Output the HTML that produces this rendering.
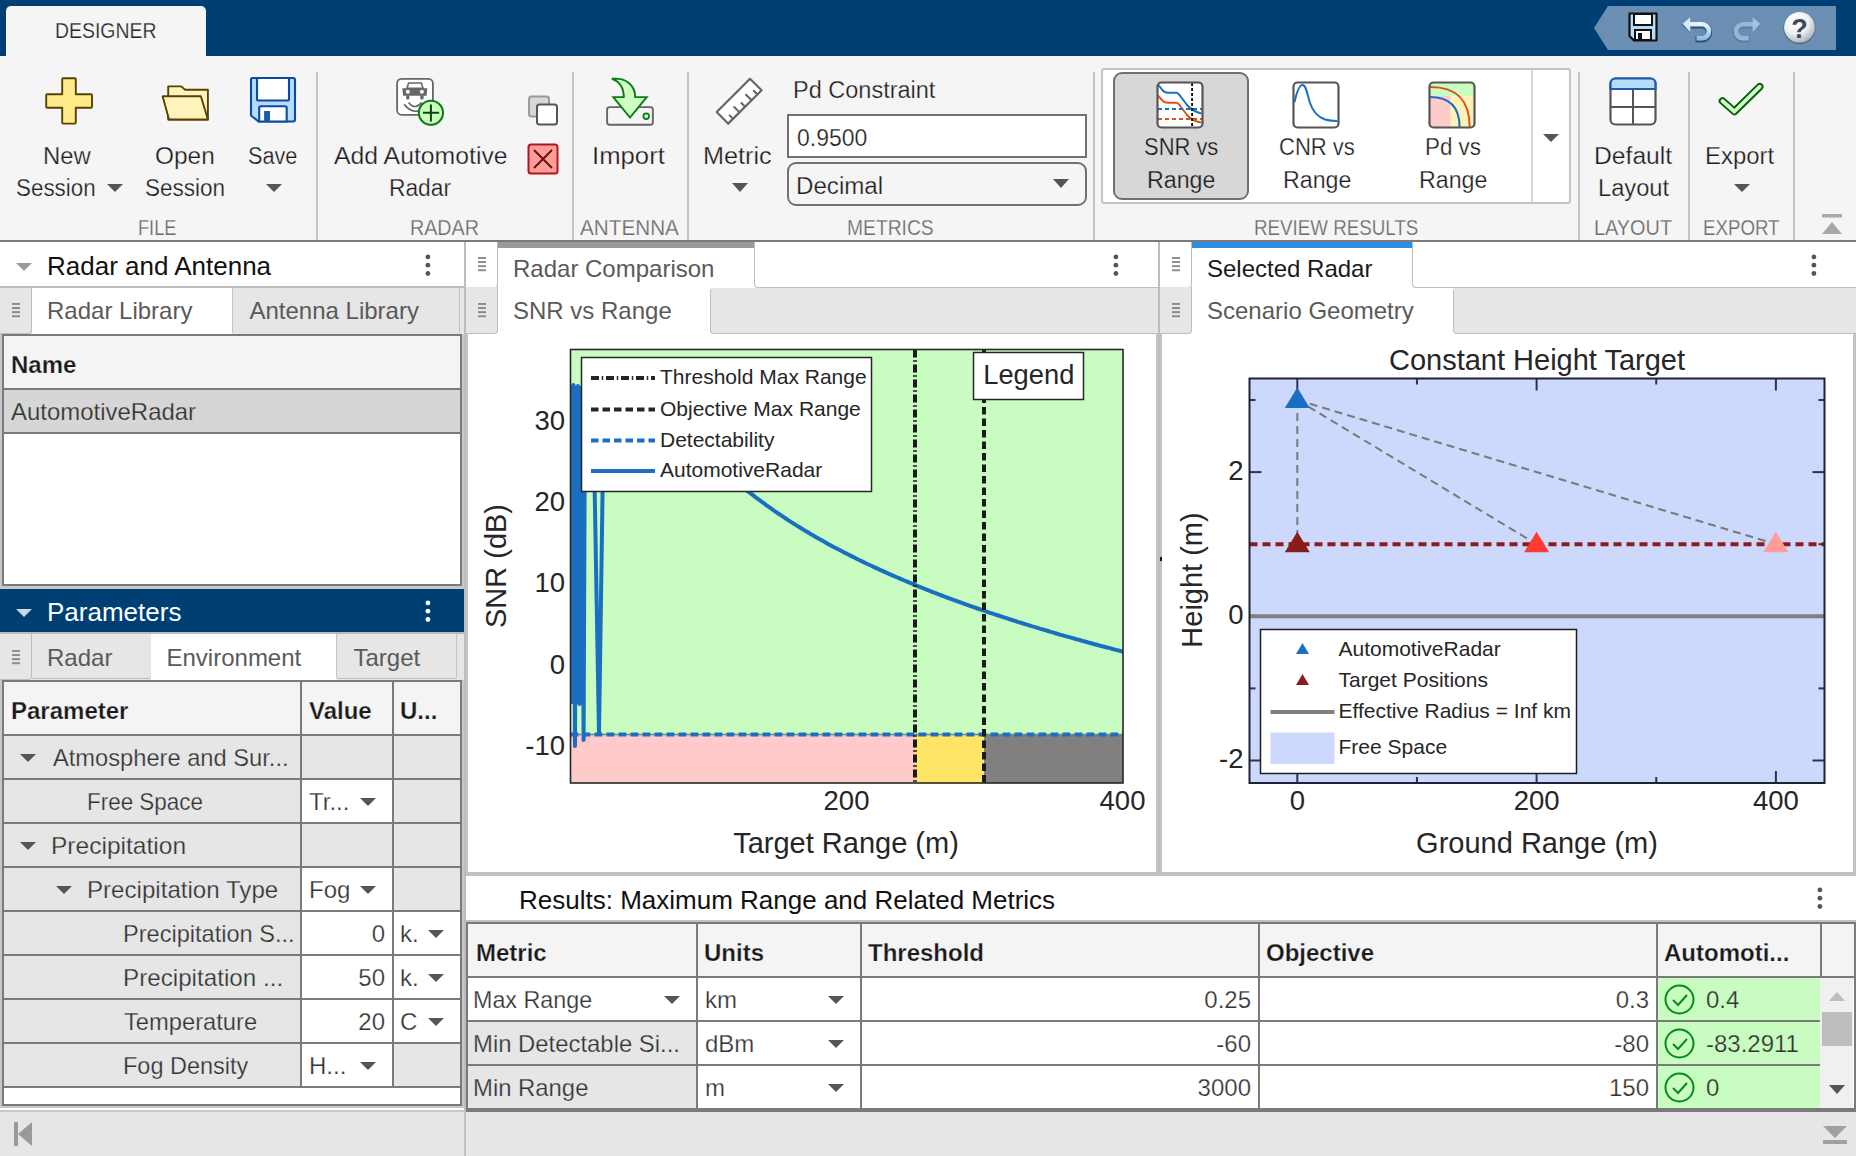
<!DOCTYPE html><html><head><meta charset="utf-8"><style>html,body{margin:0;padding:0;width:1856px;height:1156px;overflow:hidden;background:#fff;font-family:"Liberation Sans",sans-serif}</style></head><body>
<div style="position:absolute;left:0px;top:0px;width:1856px;height:56px;background:#003f73;"></div>
<div style="position:absolute;left:6px;top:6px;width:200px;height:50px;background:#f5f5f5;border-radius:5px 5px 0 0;"></div>
<div style="position:absolute;left:55.45px;top:20px;font-family:'Liberation Sans', sans-serif;font-size:22px;line-height:22px;height:22px;color:#222;font-weight:normal;white-space:nowrap;transform-origin:0 0;transform:scaleX(0.8832);-webkit-text-stroke:0.25px #f5f5f5;">DESIGNER</div>
<svg style="position:absolute;left:1594px;top:6px;" width="242" height="44" viewBox="0 0 242 44"><polygon points="0,22 14,0 242,0 242,44 14,44" fill="#6b8fb2"/></svg>
<svg style="position:absolute;left:1628px;top:12px;" width="30" height="30" viewBox="0 0 30 30">
      <path d="M1.5,1.5 H28.5 V28.5 H6 L1.5,24 Z" fill="#b8dcf8" stroke="#111" stroke-width="2.2" stroke-linejoin="round"/>
      <rect x="6" y="2" width="18" height="11" fill="#fff" stroke="#111" stroke-width="2"/>
      <rect x="7" y="18" width="16" height="10" fill="#fff" stroke="#111" stroke-width="2"/>
      <rect x="10" y="21" width="4" height="7" fill="#111"/></svg>
<svg style="position:absolute;left:1680px;top:12px;" width="36" height="32" viewBox="0 0 36 32"><defs><linearGradient id="ug" x1="0" y1="0" x2="0" y2="1"><stop offset="0" stop-color="#e6f3fc"/><stop offset="1" stop-color="#8cc0e8"/></linearGradient></defs>
      <path d="M9,13.3 H22 A7,7 0 0 1 22,27.3 H15.5" fill="none" stroke="#1f4670" stroke-width="6.5" opacity="0.85"/>
      <polygon points="1.7,12.8 10.9,4.4 10.9,21.2" fill="#1f4670" opacity="0.5"/>
      <path d="M9,12.3 H22 A7,7 0 0 1 22,26.3 H16.5" fill="none" stroke="url(#ug)" stroke-width="4.6"/>
      <polygon points="2.7,11.8 10.4,4.9 10.4,20.3" fill="#d6ebfa"/></svg>
<svg style="position:absolute;left:1730px;top:12px;" width="36" height="32" viewBox="0 0 36 32"><path d="M24,13.3 H13 A7,7 0 0 0 13,27.3 H19.6" fill="none" stroke="#557aa0" stroke-width="6.5" opacity="0.8"/>
      <polygon points="31.3,12.8 22.1,4.4 22.1,21.2" fill="#557aa0" opacity="0.5"/>
      <path d="M24,12.3 H13 A7,7 0 0 0 13,26.3 H18.6" fill="none" stroke="#94b8d6" stroke-width="4.6"/>
      <polygon points="30.3,11.8 22.6,4.9 22.6,20.3" fill="#a3c4de"/></svg>
<svg style="position:absolute;left:1782px;top:10px;" width="36" height="36" viewBox="0 0 36 36"><defs><radialGradient id="hg" cx="38%" cy="30%" r="75%"><stop offset="0" stop-color="#ffffff"/><stop offset="0.55" stop-color="#eef0f2"/><stop offset="1" stop-color="#a5adb5"/></radialGradient></defs>
      <circle cx="17.5" cy="18" r="16" fill="#2c4560" opacity="0.6"/>
      <circle cx="17.5" cy="17.4" r="15.4" fill="url(#hg)"/>
      <text x="17.5" y="27.5" text-anchor="middle" font-family="Liberation Sans" font-weight="bold" font-size="27" fill="#3a4a5c">?</text></svg>
<div style="position:absolute;left:0px;top:56px;width:1856px;height:184px;background:#f5f5f5;"></div>
<div style="position:absolute;left:0px;top:240px;width:1856px;height:2px;background:#7a7a7a;"></div>
<div style="position:absolute;left:316px;top:72px;width:2px;height:168px;background:#c4c4c4;"></div>
<div style="position:absolute;left:572px;top:72px;width:2px;height:168px;background:#c4c4c4;"></div>
<div style="position:absolute;left:687px;top:72px;width:2px;height:168px;background:#c4c4c4;"></div>
<div style="position:absolute;left:1093px;top:72px;width:2px;height:168px;background:#c4c4c4;"></div>
<div style="position:absolute;left:1578px;top:72px;width:2px;height:168px;background:#c4c4c4;"></div>
<div style="position:absolute;left:1688px;top:72px;width:2px;height:168px;background:#c4c4c4;"></div>
<div style="position:absolute;left:1793px;top:72px;width:2px;height:168px;background:#c4c4c4;"></div>
<div style="position:absolute;left:138.24px;top:217px;font-family:'Liberation Sans', sans-serif;font-size:22px;line-height:22px;height:22px;color:#6a6a6a;font-weight:normal;white-space:nowrap;transform-origin:0 0;transform:scaleX(0.8269);-webkit-text-stroke:0.25px #f5f5f5;">FILE</div>
<div style="position:absolute;left:409.92px;top:217px;font-family:'Liberation Sans', sans-serif;font-size:22px;line-height:22px;height:22px;color:#6a6a6a;font-weight:normal;white-space:nowrap;transform-origin:0 0;transform:scaleX(0.8956);-webkit-text-stroke:0.25px #f5f5f5;">RADAR</div>
<div style="position:absolute;left:580.00px;top:217px;font-family:'Liberation Sans', sans-serif;font-size:22px;line-height:22px;height:22px;color:#6a6a6a;font-weight:normal;white-space:nowrap;transform-origin:0 0;transform:scaleX(0.9405);-webkit-text-stroke:0.25px #f5f5f5;">ANTENNA</div>
<div style="position:absolute;left:847.16px;top:217px;font-family:'Liberation Sans', sans-serif;font-size:22px;line-height:22px;height:22px;color:#6a6a6a;font-weight:normal;white-space:nowrap;transform-origin:0 0;transform:scaleX(0.8758);-webkit-text-stroke:0.25px #f5f5f5;">METRICS</div>
<div style="position:absolute;left:1253.50px;top:217px;font-family:'Liberation Sans', sans-serif;font-size:22px;line-height:22px;height:22px;color:#6a6a6a;font-weight:normal;white-space:nowrap;transform-origin:0 0;transform:scaleX(0.8528);-webkit-text-stroke:0.25px #f5f5f5;">REVIEW RESULTS</div>
<div style="position:absolute;left:1594.41px;top:217px;font-family:'Liberation Sans', sans-serif;font-size:22px;line-height:22px;height:22px;color:#6a6a6a;font-weight:normal;white-space:nowrap;transform-origin:0 0;transform:scaleX(0.9031);-webkit-text-stroke:0.25px #f5f5f5;">LAYOUT</div>
<div style="position:absolute;left:1702.50px;top:217px;font-family:'Liberation Sans', sans-serif;font-size:22px;line-height:22px;height:22px;color:#6a6a6a;font-weight:normal;white-space:nowrap;transform-origin:0 0;transform:scaleX(0.8499);-webkit-text-stroke:0.25px #f5f5f5;">EXPORT</div>
<div style="position:absolute;left:43.09px;top:145px;font-family:'Liberation Sans', sans-serif;font-size:23px;line-height:23px;height:23px;color:#1e1e1e;font-weight:normal;white-space:nowrap;transform-origin:0 0;transform:scaleX(1.0390);-webkit-text-stroke:0.25px #f5f5f5;">New</div>
<div style="position:absolute;left:15.89px;top:177px;font-family:'Liberation Sans', sans-serif;font-size:23px;line-height:23px;height:23px;color:#1e1e1e;font-weight:normal;white-space:nowrap;transform-origin:0 0;transform:scaleX(0.9731);-webkit-text-stroke:0.25px #f5f5f5;">Session</div>
<svg style="position:absolute;left:107.0px;top:184px;" width="16" height="8" viewBox="0 0 16 8"><polygon points="0,0 16,0 8.0,8" fill="#555"/></svg>
<div style="position:absolute;left:154.90px;top:145px;font-family:'Liberation Sans', sans-serif;font-size:23px;line-height:23px;height:23px;color:#1e1e1e;font-weight:normal;white-space:nowrap;transform-origin:0 0;transform:scaleX(1.0614);-webkit-text-stroke:0.25px #f5f5f5;">Open</div>
<div style="position:absolute;left:144.99px;top:177px;font-family:'Liberation Sans', sans-serif;font-size:23px;line-height:23px;height:23px;color:#1e1e1e;font-weight:normal;white-space:nowrap;transform-origin:0 0;transform:scaleX(0.9794);-webkit-text-stroke:0.25px #f5f5f5;">Session</div>
<div style="position:absolute;left:248.02px;top:145px;font-family:'Liberation Sans', sans-serif;font-size:23px;line-height:23px;height:23px;color:#1e1e1e;font-weight:normal;white-space:nowrap;transform-origin:0 0;transform:scaleX(0.9430);-webkit-text-stroke:0.25px #f5f5f5;">Save</div>
<svg style="position:absolute;left:266.0px;top:184px;" width="16" height="8" viewBox="0 0 16 8"><polygon points="0,0 16,0 8.0,8" fill="#555"/></svg>
<div style="position:absolute;left:334.00px;top:145px;font-family:'Liberation Sans', sans-serif;font-size:23px;line-height:23px;height:23px;color:#1e1e1e;font-weight:normal;white-space:nowrap;transform-origin:0 0;transform:scaleX(1.0776);-webkit-text-stroke:0.25px #f5f5f5;">Add Automotive</div>
<div style="position:absolute;left:389.18px;top:177px;font-family:'Liberation Sans', sans-serif;font-size:23px;line-height:23px;height:23px;color:#1e1e1e;font-weight:normal;white-space:nowrap;transform-origin:0 0;transform:scaleX(0.9905);-webkit-text-stroke:0.25px #f5f5f5;">Radar</div>
<div style="position:absolute;left:592.39px;top:145px;font-family:'Liberation Sans', sans-serif;font-size:23px;line-height:23px;height:23px;color:#1e1e1e;font-weight:normal;white-space:nowrap;transform-origin:0 0;transform:scaleX(1.1176);-webkit-text-stroke:0.25px #f5f5f5;">Import</div>
<div style="position:absolute;left:702.98px;top:145px;font-family:'Liberation Sans', sans-serif;font-size:23px;line-height:23px;height:23px;color:#1e1e1e;font-weight:normal;white-space:nowrap;transform-origin:0 0;transform:scaleX(1.0973);-webkit-text-stroke:0.25px #f5f5f5;">Metric</div>
<svg style="position:absolute;left:732.0px;top:183px;" width="16" height="9" viewBox="0 0 16 9"><polygon points="0,0 16,0 8.0,9" fill="#555"/></svg>
<div style="position:absolute;left:792.82px;top:79px;font-family:'Liberation Sans', sans-serif;font-size:23px;line-height:23px;height:23px;color:#1e1e1e;font-weight:normal;white-space:nowrap;transform-origin:0 0;transform:scaleX(1.0218);-webkit-text-stroke:0.25px #f5f5f5;">Pd Constraint</div>
<div style="position:absolute;left:787px;top:114px;width:300px;height:44px;box-sizing:border-box;background:#fff;border:2px solid #717171;"></div>
<div style="position:absolute;left:797.08px;top:127px;font-family:'Liberation Sans', sans-serif;font-size:23px;line-height:23px;height:23px;color:#1e1e1e;font-weight:normal;white-space:nowrap;transform-origin:0 0;transform:scaleX(0.9977);-webkit-text-stroke:0.25px #fff;">0.9500</div>
<div style="position:absolute;left:787px;top:162px;width:300px;height:44px;box-sizing:border-box;background:#f5f5f5;border:2px solid #717171;border-radius:9px;"></div>
<div style="position:absolute;left:796.07px;top:175px;font-family:'Liberation Sans', sans-serif;font-size:23px;line-height:23px;height:23px;color:#1e1e1e;font-weight:normal;white-space:nowrap;transform-origin:0 0;transform:scaleX(1.0490);-webkit-text-stroke:0.25px #f5f5f5;">Decimal</div>
<svg style="position:absolute;left:1053.0px;top:179px;" width="16" height="9" viewBox="0 0 16 9"><polygon points="0,0 16,0 8.0,9" fill="#555"/></svg>
<div style="position:absolute;left:1101px;top:68px;width:470px;height:136px;box-sizing:border-box;background:#fff;border:2px solid #c4c4c4;border-radius:3px;"></div>
<div style="position:absolute;left:1531px;top:70px;width:2px;height:132px;background:#d6d6d6;"></div>
<svg style="position:absolute;left:1543.0px;top:134px;" width="16" height="8" viewBox="0 0 16 8"><polygon points="0,0 16,0 8.0,8" fill="#555"/></svg>
<div style="position:absolute;left:1113px;top:72px;width:136px;height:128px;box-sizing:border-box;background:#d7d7d7;border:2px solid #707070;border-radius:9px;"></div>
<div style="position:absolute;left:1144.41px;top:136px;font-family:'Liberation Sans', sans-serif;font-size:23px;line-height:23px;height:23px;color:#1e1e1e;font-weight:normal;white-space:nowrap;transform-origin:0 0;transform:scaleX(0.9536);-webkit-text-stroke:0.25px #d7d7d7;">SNR vs</div>
<div style="position:absolute;left:1146.74px;top:169px;font-family:'Liberation Sans', sans-serif;font-size:23px;line-height:23px;height:23px;color:#1e1e1e;font-weight:normal;white-space:nowrap;transform-origin:0 0;transform:scaleX(1.0083);-webkit-text-stroke:0.25px #d7d7d7;">Range</div>
<div style="position:absolute;left:1278.90px;top:136px;font-family:'Liberation Sans', sans-serif;font-size:23px;line-height:23px;height:23px;color:#1e1e1e;font-weight:normal;white-space:nowrap;transform-origin:0 0;transform:scaleX(0.9576);-webkit-text-stroke:0.25px #fff;">CNR vs</div>
<div style="position:absolute;left:1282.74px;top:169px;font-family:'Liberation Sans', sans-serif;font-size:23px;line-height:23px;height:23px;color:#1e1e1e;font-weight:normal;white-space:nowrap;transform-origin:0 0;transform:scaleX(1.0083);-webkit-text-stroke:0.25px #fff;">Range</div>
<div style="position:absolute;left:1424.81px;top:136px;font-family:'Liberation Sans', sans-serif;font-size:23px;line-height:23px;height:23px;color:#1e1e1e;font-weight:normal;white-space:nowrap;transform-origin:0 0;transform:scaleX(0.9735);-webkit-text-stroke:0.25px #fff;">Pd vs</div>
<div style="position:absolute;left:1418.74px;top:169px;font-family:'Liberation Sans', sans-serif;font-size:23px;line-height:23px;height:23px;color:#1e1e1e;font-weight:normal;white-space:nowrap;transform-origin:0 0;transform:scaleX(1.0083);-webkit-text-stroke:0.25px #fff;">Range</div>
<div style="position:absolute;left:1594.03px;top:145px;font-family:'Liberation Sans', sans-serif;font-size:23px;line-height:23px;height:23px;color:#1e1e1e;font-weight:normal;white-space:nowrap;transform-origin:0 0;transform:scaleX(1.0728);-webkit-text-stroke:0.25px #f5f5f5;">Default</div>
<div style="position:absolute;left:1597.71px;top:177px;font-family:'Liberation Sans', sans-serif;font-size:23px;line-height:23px;height:23px;color:#1e1e1e;font-weight:normal;white-space:nowrap;transform-origin:0 0;transform:scaleX(1.0292);-webkit-text-stroke:0.25px #f5f5f5;">Layout</div>
<div style="position:absolute;left:1705.09px;top:145px;font-family:'Liberation Sans', sans-serif;font-size:23px;line-height:23px;height:23px;color:#1e1e1e;font-weight:normal;white-space:nowrap;transform-origin:0 0;transform:scaleX(1.0404);-webkit-text-stroke:0.25px #f5f5f5;">Export</div>
<svg style="position:absolute;left:1734.0px;top:184px;" width="16" height="8" viewBox="0 0 16 8"><polygon points="0,0 16,0 8.0,8" fill="#555"/></svg>
<svg style="position:absolute;left:1822px;top:214px;" width="20" height="20" viewBox="0 0 20 20"><rect x="0" y="0" width="20" height="3.5" fill="#a8a8a8"/><polygon points="10,8 20,20 0,20" fill="#a8a8a8"/></svg>
<svg style="position:absolute;left:45px;top:77px;" width="48" height="48" viewBox="0 0 48 48"><path d="M18.2,1.2 H29.8 A1,1 0 0 1 30.8,2.2 V17.2 H46 A1,1 0 0 1 47,18.2 V29.7 A1,1 0 0 1 46,30.7 H30.8 V45.6 A1,1 0 0 1 29.8,46.6 H18.2 A1,1 0 0 1 17.2,45.6 V30.7 H2.2 A1,1 0 0 1 1.2,29.7 V18.2 A1,1 0 0 1 2.2,17.2 H17.2 V2.2 A1,1 0 0 1 18.2,1.2 Z" fill="#ffeb8a" stroke="#5c4000" stroke-width="1.9" stroke-linejoin="round"/></svg>
<svg style="position:absolute;left:160px;top:83px;" width="50" height="40" viewBox="0 0 50 40"><path d="M8.2,36.5 V3.4 H21.2 L25.2,6.8 H47.9 V36.5 Z" fill="#fff3bd" stroke="#5c4000" stroke-width="1.9" stroke-linejoin="round"/>
      <path d="M2.6,13.3 H40.9 L47.9,36.5 H9 Z" fill="#fff3bd" stroke="#5c4000" stroke-width="1.9" stroke-linejoin="round"/></svg>
<svg style="position:absolute;left:249px;top:76px;" width="48" height="48" viewBox="0 0 48 48"><path d="M3.5,2 H44 A2,2 0 0 1 46,4 V43.5 A2,2 0 0 1 44,45.5 H9.5 L2,39.5 V3.5 A1.5,1.5 0 0 1 3.5,2 Z" fill="#b5dcfb" stroke="#0a4aa0" stroke-width="2.1" stroke-linejoin="round"/>
      <path d="M8,2 V23 A1.5,1.5 0 0 0 9.5,24.5 H38.5 A1.5,1.5 0 0 0 40,23 V2 Z" fill="#fff" stroke="#0a4aa0" stroke-width="2.1"/>
      <path d="M10.2,45.5 V31.8 A1.5,1.5 0 0 1 11.7,30.3 H36.2 A1.5,1.5 0 0 1 37.7,31.8 V45.5 Z" fill="#fff" stroke="#0a4aa0" stroke-width="2.1"/>
      <rect x="15.1" y="35" width="5.9" height="10.5" fill="#1a5aab"/></svg>
<svg style="position:absolute;left:395px;top:76px;" width="50" height="50" viewBox="0 0 50 50"><rect x="2.1" y="2.9" width="35.8" height="35.9" rx="4.5" fill="#fff" stroke="#666" stroke-width="1.8"/>
      <path d="M13.6,7 H26.4 L28,12.3 H12 Z" fill="#fff" stroke="#666" stroke-width="1.6" stroke-linejoin="round"/>
      <path d="M7.4,12.2 H32.3 L31.6,19.7 H8.1 Z" fill="#666"/>
      <circle cx="12.8" cy="15.8" r="2" fill="#fff"/><circle cx="26.9" cy="15.8" r="2" fill="#fff"/>
      <rect x="11.1" y="19" width="3.3" height="4.6" rx="1.5" fill="#666"/><rect x="25.3" y="19" width="3.3" height="4.6" rx="1.5" fill="#666"/>
      <path d="M13.6,26.4 Q20,34.6 26.6,26.4" fill="none" stroke="#666" stroke-width="1.7"/>
      <path d="M9.2,28.4 Q20,41.5 31,29.5" fill="none" stroke="#666" stroke-width="1.7"/>
      <circle cx="35.9" cy="36.8" r="12.1" fill="#ccffc0" stroke="#0a7d16" stroke-width="2.1"/>
      <path d="M35.9,28.5 V45.4 M27.9,36.8 H44.2" stroke="#004d00" stroke-width="2"/></svg>
<svg style="position:absolute;left:527px;top:95px;" width="32" height="32" viewBox="0 0 32 32"><rect x="2" y="1.5" width="20" height="20" rx="2.5" fill="#d8d8d8" stroke="#9a9a9a" stroke-width="2"/>
      <rect x="10" y="9.5" width="20" height="20" rx="2.5" fill="#fff" stroke="#555" stroke-width="2"/></svg>
<svg style="position:absolute;left:527px;top:143px;" width="32" height="32" viewBox="0 0 32 32"><rect x="1.5" y="1.5" width="29" height="29" rx="2.5" fill="#ff9c9c" stroke="#b01818" stroke-width="2"/>
      <path d="M7,7 L25,25 M25,7 L7,25" stroke="#6a0f0f" stroke-width="2"/></svg>
<svg style="position:absolute;left:604px;top:76px;" width="52" height="52" viewBox="0 0 52 52"><rect x="3.1" y="31.1" width="45.8" height="17.7" rx="2.5" fill="#f5f5f5" stroke="#666" stroke-width="1.9"/>
      <circle cx="42.2" cy="40.2" r="2.8" fill="#ccffc0" stroke="#0a7d16" stroke-width="1.8"/>
      <path d="M7.9,2.8 C22,1.5 31.2,9 31.2,21.1 H42.7 L26,41.6 L9.3,21.1 H19.8 C19.8,12 15.5,5.5 7.9,2.8 Z" fill="#ccffc0" stroke="#0a7d16" stroke-width="1.9" stroke-linejoin="miter"/></svg>
<svg style="position:absolute;left:713px;top:76px;" width="52" height="52" viewBox="0 0 52 52"><polygon points="37,2.8 48.6,14.2 15.1,47.6 3.7,36" fill="#fff" stroke="#666" stroke-width="2.2" stroke-linejoin="round"/><path d="M20.1,42.9 L16.6,39.4 M26.3,36.1 L21.2,31.0 M31.9,30.5 L28.4,27.0 M38.1,23.8 L33.0,18.7 M44.3,18.2 L40.8,14.7" stroke="#666" stroke-width="2" stroke-linecap="round"/></svg>
<svg style="position:absolute;left:1156px;top:81px;" width="48" height="48" viewBox="0 0 48 48"><rect x="1.5" y="1.5" width="45" height="45" rx="4" fill="#fff"/>
      <path d="M2,3.5 L6,8.5 Q8,11.8 12,11.8 H20.6 Q22,11.8 25,16 L31,24 Q36,30 45.3,32.5" fill="none" stroke="#1a6fc0" stroke-width="2"/>
      <path d="M2,14.5 L6,19 Q8,21.8 12,21.8 H20.6 Q22,21.8 25,26 L31,34 Q36,40 45.3,41.6" fill="none" stroke="#d9541a" stroke-width="2"/>
      <path d="M2,27.9 H46" stroke="#1a6fc0" stroke-width="2" stroke-dasharray="4,3"/>
      <path d="M2,38 H46" stroke="#d9541a" stroke-width="2" stroke-dasharray="4,3"/>
      <path d="M36.1,2 V46" stroke="#111" stroke-width="1.9" stroke-dasharray="3,2"/>
      <rect x="1.5" y="1.5" width="45" height="45" rx="4" fill="none" stroke="#555" stroke-width="2.2"/></svg>
<svg style="position:absolute;left:1292px;top:81px;" width="48" height="48" viewBox="0 0 48 48"><rect x="1.5" y="1.5" width="45" height="45" rx="4" fill="#fff" stroke="#555" stroke-width="2.2"/>
      <path d="M2.5,21 C5,10 8,4 10.5,4 C14,4 15,12 18,22 C21,31 26,36 33,38.5 C38,40 42,40 45.5,40" fill="none" stroke="#1a6fc0" stroke-width="2"/></svg>
<svg style="position:absolute;left:1428px;top:81px;" width="48" height="48" viewBox="0 0 48 48"><rect x="2" y="2" width="44" height="44" rx="4" fill="#fdf3b8"/>
      <path d="M2,15 V6 A4,4 0 0 1 6,2 H42 A4,4 0 0 1 46,6 V15 Z" fill="#c9fcc0"/>
      <path d="M2,15 H22.4 V46 H6 A4,4 0 0 1 2,42 Z" fill="#ffcaca"/>
      <path d="M2,16 C22,16 31.6,26 31.6,46" fill="none" stroke="#1a6fc0" stroke-width="2"/>
      <path d="M2,5.9 C30,5.9 41.7,20 41.7,46" fill="none" stroke="#d9541a" stroke-width="2"/>
      <rect x="1.5" y="1.5" width="45" height="45" rx="4" fill="none" stroke="#555" stroke-width="2.2"/></svg>
<svg style="position:absolute;left:1609px;top:77px;" width="48" height="50" viewBox="0 0 48 50"><rect x="1.5" y="1.5" width="45" height="46" rx="5" fill="#fff" stroke="#555" stroke-width="2.2"/>
      <path d="M1.5,12 V6.5 A5,5 0 0 1 6.5,1.5 H41.5 A5,5 0 0 1 46.5,6.5 V12 Z" fill="#b5dcfb" stroke="#1f5bab" stroke-width="2.2"/>
      <path d="M24,12 V47 M2,30 H46" stroke="#555" stroke-width="2"/></svg>
<svg style="position:absolute;left:1717px;top:81px;" width="48" height="38" viewBox="0 0 48 38"><path d="M5.5,20 L17.4,30.5 L42.7,5.7" fill="none" stroke="#0a5a12" stroke-width="7.6" stroke-linecap="round" stroke-linejoin="round"/>
      <path d="M5.5,20 L17.4,30.5 L42.7,5.7" fill="none" stroke="#ccffc0" stroke-width="3.8" stroke-linecap="round" stroke-linejoin="round"/></svg>
<div style="position:absolute;left:0px;top:242px;width:464px;height:870px;background:#fff;"></div>
<svg style="position:absolute;left:16.0px;top:263px;" width="16" height="8" viewBox="0 0 16 8"><polygon points="0,0 16,0 8.0,8" fill="#9a9a9a"/></svg>
<div style="position:absolute;left:47px;top:253px;font-family:'Liberation Sans', sans-serif;font-size:26px;line-height:26px;height:26px;color:#111;font-weight:normal;white-space:nowrap;">Radar and Antenna</div>
<svg style="position:absolute;left:425.1px;top:253.79999999999998px;" width="5.8" height="22.400000000000002" viewBox="0 0 5.8 22.400000000000002"><circle cx="2.9" cy="2.9" r="2.4" fill="#555"/><circle cx="2.9" cy="11.200000000000001" r="2.4" fill="#555"/><circle cx="2.9" cy="19.5" r="2.4" fill="#555"/></svg>
<div style="position:absolute;left:0px;top:286px;width:464px;height:1.7px;background:#bbbbbb;"></div>
<div style="position:absolute;left:0px;top:287.7px;width:464px;height:46.3px;background:#e6e6e6;"></div>
<div style="position:absolute;left:0px;top:287.7px;width:32px;height:46px;box-sizing:border-box;background:#e6e6e6;border-right:1.5px solid #bdbdbd;border-bottom:1.5px solid #bdbdbd;border-bottom-right-radius:4px;"></div>
<svg style="position:absolute;left:12px;top:303px;" width="8" height="15" viewBox="0 0 8 15"><rect x="0" y="0.00" width="8" height="1.9" fill="#8a8a8a"/><rect x="0" y="4.10" width="8" height="1.9" fill="#8a8a8a"/><rect x="0" y="8.20" width="8" height="1.9" fill="#8a8a8a"/><rect x="0" y="12.30" width="8" height="1.9" fill="#8a8a8a"/></svg>
<div style="position:absolute;left:32px;top:287.7px;width:200px;height:46.3px;background:#fff;"></div>
<div style="position:absolute;left:47px;top:299px;font-family:'Liberation Sans', sans-serif;font-size:24px;line-height:24px;height:24px;color:#5a5a5a;font-weight:normal;white-space:nowrap;">Radar Library</div>
<div style="position:absolute;left:232px;top:287.7px;width:227.5px;height:45.5px;box-sizing:border-box;background:#e6e6e6;border-left:1.5px solid #c4c4c4;border-right:1.5px solid #c4c4c4;"></div>
<div style="position:absolute;left:249.5px;top:299px;font-family:'Liberation Sans', sans-serif;font-size:24px;line-height:24px;height:24px;color:#5a5a5a;font-weight:normal;white-space:nowrap;">Antenna Library</div>
<div style="position:absolute;left:0px;top:334px;width:464px;height:255px;background:#c8c8c8;"></div>
<div style="position:absolute;left:2px;top:334px;width:460px;height:252px;box-sizing:border-box;background:#fff;border:2px solid #7a7a7a;"></div>
<div style="position:absolute;left:4px;top:336px;width:456px;height:52px;background:#f4f4f4;"></div>
<div style="position:absolute;left:4px;top:388px;width:456px;height:2px;background:#7a7a7a;"></div>
<div style="position:absolute;left:11px;top:353px;font-family:'Liberation Sans', sans-serif;font-size:24px;line-height:24px;height:24px;color:#1a1a1a;font-weight:bold;white-space:nowrap;-webkit-text-stroke:0.25px #f4f4f4;">Name</div>
<div style="position:absolute;left:4px;top:390px;width:456px;height:42px;background:#d6d6d6;"></div>
<div style="position:absolute;left:4px;top:432px;width:456px;height:2px;background:#7a7a7a;"></div>
<div style="position:absolute;left:11.00px;top:400px;font-family:'Liberation Sans', sans-serif;font-size:24px;line-height:24px;height:24px;color:#333;font-weight:normal;white-space:nowrap;transform-origin:0 0;transform:scaleX(0.9982);-webkit-text-stroke:0.25px #d6d6d6;">AutomotiveRadar</div>
<div style="position:absolute;left:0px;top:589px;width:464px;height:43px;background:#003f73;"></div>
<svg style="position:absolute;left:16.0px;top:609px;" width="16" height="8" viewBox="0 0 16 8"><polygon points="0,0 16,0 8.0,8" fill="#c9d6e6"/></svg>
<div style="position:absolute;left:47px;top:599px;font-family:'Liberation Sans', sans-serif;font-size:26px;line-height:26px;height:26px;color:#fff;font-weight:normal;white-space:nowrap;">Parameters</div>
<svg style="position:absolute;left:425.1px;top:599.8000000000001px;" width="5.8" height="22.400000000000002" viewBox="0 0 5.8 22.400000000000002"><circle cx="2.9" cy="2.9" r="2.4" fill="#fff"/><circle cx="2.9" cy="11.200000000000001" r="2.4" fill="#fff"/><circle cx="2.9" cy="19.5" r="2.4" fill="#fff"/></svg>
<div style="position:absolute;left:0px;top:632px;width:464px;height:48px;background:#e6e6e6;"></div>
<div style="position:absolute;left:0px;top:632px;width:464px;height:1.7px;background:#bbbbbb;"></div>
<div style="position:absolute;left:0px;top:633.7px;width:32px;height:46px;box-sizing:border-box;background:#e6e6e6;border-right:1.5px solid #bdbdbd;border-bottom:1.5px solid #bdbdbd;border-bottom-right-radius:4px;"></div>
<svg style="position:absolute;left:12px;top:650px;" width="8" height="15" viewBox="0 0 8 15"><rect x="0" y="0.00" width="8" height="1.9" fill="#8a8a8a"/><rect x="0" y="4.10" width="8" height="1.9" fill="#8a8a8a"/><rect x="0" y="8.20" width="8" height="1.9" fill="#8a8a8a"/><rect x="0" y="12.30" width="8" height="1.9" fill="#8a8a8a"/></svg>
<div style="position:absolute;left:32px;top:633.7px;width:119px;height:45.5px;box-sizing:border-box;background:#e6e6e6;border-bottom:1.5px solid #bdbdbd;border-bottom-right-radius:4px;"></div>
<div style="position:absolute;left:151px;top:633.7px;width:185px;height:46.3px;background:#fff;"></div>
<div style="position:absolute;left:47px;top:646px;font-family:'Liberation Sans', sans-serif;font-size:24px;line-height:24px;height:24px;color:#5a5a5a;font-weight:normal;white-space:nowrap;">Radar</div>
<div style="position:absolute;left:166.5px;top:646px;font-family:'Liberation Sans', sans-serif;font-size:24px;line-height:24px;height:24px;color:#5a5a5a;font-weight:normal;white-space:nowrap;">Environment</div>
<div style="position:absolute;left:336px;top:633.7px;width:121px;height:45.5px;box-sizing:border-box;background:#e6e6e6;border-left:1.5px solid #c4c4c4;border-right:1.5px solid #c4c4c4;border-bottom:1.5px solid #bdbdbd;border-bottom-left-radius:4px;"></div>
<div style="position:absolute;left:353.5px;top:646px;font-family:'Liberation Sans', sans-serif;font-size:24px;line-height:24px;height:24px;color:#5a5a5a;font-weight:normal;white-space:nowrap;">Target</div>
<div style="position:absolute;left:0px;top:680px;width:464px;height:428px;background:#c8c8c8;"></div>
<div style="position:absolute;left:2px;top:680px;width:460px;height:426px;box-sizing:border-box;background:#fff;border:2px solid #7a7a7a;"></div>
<div style="position:absolute;left:4px;top:682px;width:456px;height:52px;background:#f4f4f4;"></div>
<div style="position:absolute;left:11px;top:699px;font-family:'Liberation Sans', sans-serif;font-size:24px;line-height:24px;height:24px;color:#1a1a1a;font-weight:bold;white-space:nowrap;-webkit-text-stroke:0.25px #f4f4f4;">Parameter</div>
<div style="position:absolute;left:309px;top:699px;font-family:'Liberation Sans', sans-serif;font-size:24px;line-height:24px;height:24px;color:#1a1a1a;font-weight:bold;white-space:nowrap;-webkit-text-stroke:0.25px #f4f4f4;">Value</div>
<div style="position:absolute;left:400px;top:699px;font-family:'Liberation Sans', sans-serif;font-size:24px;line-height:24px;height:24px;color:#1a1a1a;font-weight:bold;white-space:nowrap;-webkit-text-stroke:0.25px #f4f4f4;">U...</div>
<div style="position:absolute;left:4px;top:734px;width:456px;height:2px;background:#7a7a7a;"></div>
<div style="position:absolute;left:4px;top:736px;width:456px;height:42px;background:#e6e6e6;"></div>
<svg style="position:absolute;left:20.0px;top:754px;" width="16" height="8" viewBox="0 0 16 8"><polygon points="0,0 16,0 8.0,8" fill="#555"/></svg>
<div style="position:absolute;left:52.70px;top:746px;font-family:'Liberation Sans', sans-serif;font-size:24px;line-height:24px;height:24px;color:#333;font-weight:normal;white-space:nowrap;transform-origin:0 0;transform:scaleX(0.9863);-webkit-text-stroke:0.25px #e6e6e6;">Atmosphere and Sur...</div>
<div style="position:absolute;left:4px;top:778px;width:456px;height:2px;background:#7a7a7a;"></div>
<div style="position:absolute;left:4px;top:780px;width:456px;height:42px;background:#e6e6e6;"></div>
<div style="position:absolute;left:302px;top:780px;width:90px;height:42px;background:#fff;"></div>
<div style="position:absolute;left:86.80px;top:790px;font-family:'Liberation Sans', sans-serif;font-size:24px;line-height:24px;height:24px;color:#333;font-weight:normal;white-space:nowrap;transform-origin:0 0;transform:scaleX(0.9349);-webkit-text-stroke:0.25px #e6e6e6;">Free Space</div>
<div style="position:absolute;left:309px;top:790px;font-family:'Liberation Sans', sans-serif;font-size:24px;line-height:24px;height:24px;color:#333;font-weight:normal;white-space:nowrap;-webkit-text-stroke:0.25px #fff;">Tr...</div>
<svg style="position:absolute;left:360.0px;top:798px;" width="16" height="8" viewBox="0 0 16 8"><polygon points="0,0 16,0 8.0,8" fill="#555"/></svg>
<div style="position:absolute;left:4px;top:822px;width:456px;height:2px;background:#7a7a7a;"></div>
<div style="position:absolute;left:4px;top:824px;width:456px;height:42px;background:#e6e6e6;"></div>
<svg style="position:absolute;left:20.0px;top:842px;" width="16" height="8" viewBox="0 0 16 8"><polygon points="0,0 16,0 8.0,8" fill="#555"/></svg>
<div style="position:absolute;left:50.74px;top:834px;font-family:'Liberation Sans', sans-serif;font-size:24px;line-height:24px;height:24px;color:#333;font-weight:normal;white-space:nowrap;transform-origin:0 0;transform:scaleX(1.0224);-webkit-text-stroke:0.25px #e6e6e6;">Precipitation</div>
<div style="position:absolute;left:4px;top:866px;width:456px;height:2px;background:#7a7a7a;"></div>
<div style="position:absolute;left:4px;top:868px;width:456px;height:42px;background:#e6e6e6;"></div>
<div style="position:absolute;left:302px;top:868px;width:90px;height:42px;background:#fff;"></div>
<svg style="position:absolute;left:56.0px;top:886px;" width="16" height="8" viewBox="0 0 16 8"><polygon points="0,0 16,0 8.0,8" fill="#555"/></svg>
<div style="position:absolute;left:86.87px;top:878px;font-family:'Liberation Sans', sans-serif;font-size:24px;line-height:24px;height:24px;color:#333;font-weight:normal;white-space:nowrap;transform-origin:0 0;transform:scaleX(1.0047);-webkit-text-stroke:0.25px #e6e6e6;">Precipitation Type</div>
<div style="position:absolute;left:309px;top:878px;font-family:'Liberation Sans', sans-serif;font-size:24px;line-height:24px;height:24px;color:#333;font-weight:normal;white-space:nowrap;-webkit-text-stroke:0.25px #fff;">Fog</div>
<svg style="position:absolute;left:360.0px;top:886px;" width="16" height="8" viewBox="0 0 16 8"><polygon points="0,0 16,0 8.0,8" fill="#555"/></svg>
<div style="position:absolute;left:4px;top:910px;width:456px;height:2px;background:#7a7a7a;"></div>
<div style="position:absolute;left:4px;top:912px;width:456px;height:42px;background:#e6e6e6;"></div>
<div style="position:absolute;left:302px;top:912px;width:90px;height:42px;background:#fff;"></div>
<div style="position:absolute;left:394px;top:912px;width:66px;height:42px;background:#fff;"></div>
<div style="position:absolute;left:123.02px;top:922px;font-family:'Liberation Sans', sans-serif;font-size:24px;line-height:24px;height:24px;color:#333;font-weight:normal;white-space:nowrap;transform-origin:0 0;transform:scaleX(0.9816);-webkit-text-stroke:0.25px #e6e6e6;">Precipitation S...</div>
<div style="position:absolute;left:385px;top:922px;font-family:'Liberation Sans', sans-serif;font-size:24px;line-height:24px;height:24px;color:#333;font-weight:normal;white-space:nowrap;transform:translateX(-100%);-webkit-text-stroke:0.25px #fff;">0</div>
<div style="position:absolute;left:400px;top:922px;font-family:'Liberation Sans', sans-serif;font-size:24px;line-height:24px;height:24px;color:#333;font-weight:normal;white-space:nowrap;-webkit-text-stroke:0.25px #fff;">k.</div>
<svg style="position:absolute;left:428.0px;top:930px;" width="16" height="8" viewBox="0 0 16 8"><polygon points="0,0 16,0 8.0,8" fill="#555"/></svg>
<div style="position:absolute;left:4px;top:954px;width:456px;height:2px;background:#7a7a7a;"></div>
<div style="position:absolute;left:4px;top:956px;width:456px;height:42px;background:#e6e6e6;"></div>
<div style="position:absolute;left:302px;top:956px;width:90px;height:42px;background:#fff;"></div>
<div style="position:absolute;left:394px;top:956px;width:66px;height:42px;background:#fff;"></div>
<div style="position:absolute;left:122.96px;top:966px;font-family:'Liberation Sans', sans-serif;font-size:24px;line-height:24px;height:24px;color:#333;font-weight:normal;white-space:nowrap;transform-origin:0 0;transform:scaleX(1.0087);-webkit-text-stroke:0.25px #e6e6e6;">Precipitation ...</div>
<div style="position:absolute;left:385px;top:966px;font-family:'Liberation Sans', sans-serif;font-size:24px;line-height:24px;height:24px;color:#333;font-weight:normal;white-space:nowrap;transform:translateX(-100%);-webkit-text-stroke:0.25px #fff;">50</div>
<div style="position:absolute;left:400px;top:966px;font-family:'Liberation Sans', sans-serif;font-size:24px;line-height:24px;height:24px;color:#333;font-weight:normal;white-space:nowrap;-webkit-text-stroke:0.25px #fff;">k.</div>
<svg style="position:absolute;left:428.0px;top:974px;" width="16" height="8" viewBox="0 0 16 8"><polygon points="0,0 16,0 8.0,8" fill="#555"/></svg>
<div style="position:absolute;left:4px;top:998px;width:456px;height:2px;background:#7a7a7a;"></div>
<div style="position:absolute;left:4px;top:1000px;width:456px;height:42px;background:#e6e6e6;"></div>
<div style="position:absolute;left:302px;top:1000px;width:90px;height:42px;background:#fff;"></div>
<div style="position:absolute;left:394px;top:1000px;width:66px;height:42px;background:#fff;"></div>
<div style="position:absolute;left:124.43px;top:1010px;font-family:'Liberation Sans', sans-serif;font-size:24px;line-height:24px;height:24px;color:#333;font-weight:normal;white-space:nowrap;transform-origin:0 0;transform:scaleX(0.9880);-webkit-text-stroke:0.25px #e6e6e6;">Temperature</div>
<div style="position:absolute;left:385px;top:1010px;font-family:'Liberation Sans', sans-serif;font-size:24px;line-height:24px;height:24px;color:#333;font-weight:normal;white-space:nowrap;transform:translateX(-100%);-webkit-text-stroke:0.25px #fff;">20</div>
<div style="position:absolute;left:400px;top:1010px;font-family:'Liberation Sans', sans-serif;font-size:24px;line-height:24px;height:24px;color:#333;font-weight:normal;white-space:nowrap;-webkit-text-stroke:0.25px #fff;">C</div>
<svg style="position:absolute;left:428.0px;top:1018px;" width="16" height="8" viewBox="0 0 16 8"><polygon points="0,0 16,0 8.0,8" fill="#555"/></svg>
<div style="position:absolute;left:4px;top:1042px;width:456px;height:2px;background:#7a7a7a;"></div>
<div style="position:absolute;left:4px;top:1044px;width:456px;height:42px;background:#e6e6e6;"></div>
<div style="position:absolute;left:302px;top:1044px;width:90px;height:42px;background:#fff;"></div>
<div style="position:absolute;left:123.02px;top:1054px;font-family:'Liberation Sans', sans-serif;font-size:24px;line-height:24px;height:24px;color:#333;font-weight:normal;white-space:nowrap;transform-origin:0 0;transform:scaleX(0.9784);-webkit-text-stroke:0.25px #e6e6e6;">Fog Density</div>
<div style="position:absolute;left:309px;top:1054px;font-family:'Liberation Sans', sans-serif;font-size:24px;line-height:24px;height:24px;color:#333;font-weight:normal;white-space:nowrap;-webkit-text-stroke:0.25px #fff;">H...</div>
<svg style="position:absolute;left:360.0px;top:1062px;" width="16" height="8" viewBox="0 0 16 8"><polygon points="0,0 16,0 8.0,8" fill="#555"/></svg>
<div style="position:absolute;left:4px;top:1086px;width:456px;height:2px;background:#7a7a7a;"></div>
<div style="position:absolute;left:300px;top:682px;width:2px;height:404px;background:#7a7a7a;"></div>
<div style="position:absolute;left:392px;top:682px;width:2px;height:404px;background:#7a7a7a;"></div>
<div style="position:absolute;left:0px;top:1108px;width:464px;height:2px;background:#fff;"></div>
<div style="position:absolute;left:0px;top:1110px;width:464px;height:2px;background:#c8c8c8;"></div>
<div style="position:absolute;left:464px;top:242px;width:2px;height:914px;background:#bdbdbd;"></div>
<div style="position:absolute;left:1158px;top:242px;width:2px;height:630px;background:#bdbdbd;"></div>
<div style="position:absolute;left:466px;top:242px;width:692px;height:45px;background:#fff;"></div>
<div style="position:absolute;left:466px;top:242px;width:32px;height:45.5px;box-sizing:border-box;background:#fff;border-right:1.5px solid #bdbdbd;border-bottom:1.5px solid #bdbdbd;border-bottom-right-radius:4px;"></div>
<svg style="position:absolute;left:478px;top:257px;" width="8" height="15" viewBox="0 0 8 15"><rect x="0" y="0.00" width="8" height="1.9" fill="#8a8a8a"/><rect x="0" y="4.10" width="8" height="1.9" fill="#8a8a8a"/><rect x="0" y="8.20" width="8" height="1.9" fill="#8a8a8a"/><rect x="0" y="12.30" width="8" height="1.9" fill="#8a8a8a"/></svg>
<div style="position:absolute;left:498px;top:242px;width:256px;height:6px;background:#9a9a9a;"></div>
<div style="position:absolute;left:513px;top:257px;font-family:'Liberation Sans', sans-serif;font-size:24px;line-height:24px;height:24px;color:#5a5a5a;font-weight:normal;white-space:nowrap;">Radar Comparison</div>
<div style="position:absolute;left:754px;top:242px;width:404px;height:45.5px;box-sizing:border-box;background:#fff;border-left:1.5px solid #bdbdbd;border-bottom:1.5px solid #bdbdbd;border-bottom-left-radius:4px;"></div>
<div style="position:absolute;left:466px;top:287px;width:32px;height:47px;box-sizing:border-box;background:#e6e6e6;border-right:1.5px solid #bdbdbd;border-bottom:1.5px solid #bdbdbd;border-bottom-right-radius:4px;"></div>
<svg style="position:absolute;left:478px;top:303px;" width="8" height="15" viewBox="0 0 8 15"><rect x="0" y="0.00" width="8" height="1.9" fill="#8a8a8a"/><rect x="0" y="4.10" width="8" height="1.9" fill="#8a8a8a"/><rect x="0" y="8.20" width="8" height="1.9" fill="#8a8a8a"/><rect x="0" y="12.30" width="8" height="1.9" fill="#8a8a8a"/></svg>
<div style="position:absolute;left:498px;top:287.5px;width:212px;height:46.5px;background:#fff;"></div>
<div style="position:absolute;left:513px;top:299px;font-family:'Liberation Sans', sans-serif;font-size:24px;line-height:24px;height:24px;color:#5a5a5a;font-weight:normal;white-space:nowrap;">SNR vs Range</div>
<div style="position:absolute;left:710px;top:288px;width:448px;height:46px;box-sizing:border-box;background:#e6e6e6;border-left:1.5px solid #bdbdbd;border-bottom:1.5px solid #bdbdbd;border-top-left-radius:4px;border-bottom-left-radius:4px;"></div>
<svg style="position:absolute;left:1113.1px;top:253.79999999999998px;" width="5.8" height="22.400000000000002" viewBox="0 0 5.8 22.400000000000002"><circle cx="2.9" cy="2.9" r="2.4" fill="#555"/><circle cx="2.9" cy="11.200000000000001" r="2.4" fill="#555"/><circle cx="2.9" cy="19.5" r="2.4" fill="#555"/></svg>
<div style="position:absolute;left:466px;top:334px;width:692px;height:538px;background:#fff;"></div>
<div style="position:absolute;left:466px;top:334px;width:2px;height:538px;background:#c2c2c2;"></div>
<div style="position:absolute;left:1156px;top:334px;width:2px;height:538px;background:#c2c2c2;"></div>
<div style="position:absolute;left:1160px;top:242px;width:696px;height:45px;background:#fff;"></div>
<div style="position:absolute;left:1160px;top:242px;width:32px;height:45.5px;box-sizing:border-box;background:#fff;border-right:1.5px solid #bdbdbd;border-bottom:1.5px solid #bdbdbd;border-bottom-right-radius:4px;"></div>
<svg style="position:absolute;left:1172px;top:257px;" width="8" height="15" viewBox="0 0 8 15"><rect x="0" y="0.00" width="8" height="1.9" fill="#8a8a8a"/><rect x="0" y="4.10" width="8" height="1.9" fill="#8a8a8a"/><rect x="0" y="8.20" width="8" height="1.9" fill="#8a8a8a"/><rect x="0" y="12.30" width="8" height="1.9" fill="#8a8a8a"/></svg>
<div style="position:absolute;left:1192px;top:242px;width:220px;height:6px;background:#2d8ee0;"></div>
<div style="position:absolute;left:1207px;top:257px;font-family:'Liberation Sans', sans-serif;font-size:24px;line-height:24px;height:24px;color:#1a1a1a;font-weight:normal;white-space:nowrap;">Selected Radar</div>
<div style="position:absolute;left:1412px;top:242px;width:444px;height:45.5px;box-sizing:border-box;background:#fff;border-left:1.5px solid #bdbdbd;border-bottom:1.5px solid #bdbdbd;border-bottom-left-radius:4px;"></div>
<div style="position:absolute;left:1160px;top:287px;width:32px;height:47px;box-sizing:border-box;background:#e6e6e6;border-right:1.5px solid #bdbdbd;border-bottom:1.5px solid #bdbdbd;border-bottom-right-radius:4px;"></div>
<svg style="position:absolute;left:1172px;top:303px;" width="8" height="15" viewBox="0 0 8 15"><rect x="0" y="0.00" width="8" height="1.9" fill="#8a8a8a"/><rect x="0" y="4.10" width="8" height="1.9" fill="#8a8a8a"/><rect x="0" y="8.20" width="8" height="1.9" fill="#8a8a8a"/><rect x="0" y="12.30" width="8" height="1.9" fill="#8a8a8a"/></svg>
<div style="position:absolute;left:1192px;top:287.5px;width:261px;height:46.5px;background:#fff;"></div>
<div style="position:absolute;left:1207px;top:299px;font-family:'Liberation Sans', sans-serif;font-size:24px;line-height:24px;height:24px;color:#5a5a5a;font-weight:normal;white-space:nowrap;">Scenario Geometry</div>
<div style="position:absolute;left:1453px;top:288px;width:403px;height:46px;box-sizing:border-box;background:#e6e6e6;border-left:1.5px solid #bdbdbd;border-bottom:1.5px solid #bdbdbd;border-top-left-radius:4px;border-bottom-left-radius:4px;"></div>
<svg style="position:absolute;left:1811.1px;top:253.79999999999998px;" width="5.8" height="22.400000000000002" viewBox="0 0 5.8 22.400000000000002"><circle cx="2.9" cy="2.9" r="2.4" fill="#555"/><circle cx="2.9" cy="11.200000000000001" r="2.4" fill="#555"/><circle cx="2.9" cy="19.5" r="2.4" fill="#555"/></svg>
<div style="position:absolute;left:1160px;top:334px;width:696px;height:538px;background:#fff;"></div>
<div style="position:absolute;left:1160px;top:334px;width:2px;height:538px;background:#c2c2c2;"></div>
<div style="position:absolute;left:1853px;top:334px;width:3px;height:538px;background:#c2c2c2;"></div>
<div style="position:absolute;left:466px;top:872px;width:1390px;height:4px;background:#c2c2c2;"></div>
<div style="position:absolute;left:1160px;top:557px;width:2px;height:4px;background:#111;"></div>
<div style="position:absolute;left:468px;top:876px;width:1388px;height:236px;background:#fff;"></div>
<div style="position:absolute;left:519px;top:887px;font-family:'Liberation Sans', sans-serif;font-size:26px;line-height:26px;height:26px;color:#111;font-weight:normal;white-space:nowrap;">Results: Maximum Range and Related Metrics</div>
<svg style="position:absolute;left:1817.1px;top:886.8000000000001px;" width="5.8" height="22.400000000000002" viewBox="0 0 5.8 22.400000000000002"><circle cx="2.9" cy="2.9" r="2.4" fill="#555"/><circle cx="2.9" cy="11.200000000000001" r="2.4" fill="#555"/><circle cx="2.9" cy="19.5" r="2.4" fill="#555"/></svg>
<div style="position:absolute;left:466px;top:920px;width:1390px;height:2px;background:#c0c0c0;"></div>
<div style="position:absolute;left:466px;top:922px;width:1390px;height:190px;box-sizing:border-box;background:#fff;border:2px solid #7a7a7a;border-bottom-width:4px;"></div>
<div style="position:absolute;left:468px;top:924px;width:1386px;height:52px;background:#f4f4f4;"></div>
<div style="position:absolute;left:468px;top:976px;width:1386px;height:2px;background:#7a7a7a;"></div>
<div style="position:absolute;left:696px;top:923px;width:2px;height:185px;background:#7a7a7a;"></div>
<div style="position:absolute;left:860px;top:923px;width:2px;height:185px;background:#7a7a7a;"></div>
<div style="position:absolute;left:1258px;top:923px;width:2px;height:185px;background:#7a7a7a;"></div>
<div style="position:absolute;left:1656px;top:923px;width:2px;height:185px;background:#7a7a7a;"></div>
<div style="position:absolute;left:476px;top:941px;font-family:'Liberation Sans', sans-serif;font-size:24px;line-height:24px;height:24px;color:#1a1a1a;font-weight:bold;white-space:nowrap;-webkit-text-stroke:0.25px #f4f4f4;">Metric</div>
<div style="position:absolute;left:704px;top:941px;font-family:'Liberation Sans', sans-serif;font-size:24px;line-height:24px;height:24px;color:#1a1a1a;font-weight:bold;white-space:nowrap;-webkit-text-stroke:0.25px #f4f4f4;">Units</div>
<div style="position:absolute;left:868px;top:941px;font-family:'Liberation Sans', sans-serif;font-size:24px;line-height:24px;height:24px;color:#1a1a1a;font-weight:bold;white-space:nowrap;-webkit-text-stroke:0.25px #f4f4f4;">Threshold</div>
<div style="position:absolute;left:1266px;top:941px;font-family:'Liberation Sans', sans-serif;font-size:24px;line-height:24px;height:24px;color:#1a1a1a;font-weight:bold;white-space:nowrap;-webkit-text-stroke:0.25px #f4f4f4;">Objective</div>
<div style="position:absolute;left:1664px;top:941px;font-family:'Liberation Sans', sans-serif;font-size:24px;line-height:24px;height:24px;color:#1a1a1a;font-weight:bold;white-space:nowrap;-webkit-text-stroke:0.25px #f4f4f4;">Automoti...</div>
<div style="position:absolute;left:468px;top:978px;width:228px;height:42px;background:#fff;"></div>
<div style="position:absolute;left:1658px;top:978px;width:162px;height:42px;background:#c9fcc0;"></div>
<div style="position:absolute;left:473.24px;top:988px;font-family:'Liberation Sans', sans-serif;font-size:24px;line-height:24px;height:24px;color:#333;font-weight:normal;white-space:nowrap;transform-origin:0 0;transform:scaleX(0.9703);-webkit-text-stroke:0.25px #fff;">Max Range</div>
<svg style="position:absolute;left:664.0px;top:996px;" width="16" height="8" viewBox="0 0 16 8"><polygon points="0,0 16,0 8.0,8" fill="#555"/></svg>
<div style="position:absolute;left:705px;top:988px;font-family:'Liberation Sans', sans-serif;font-size:24px;line-height:24px;height:24px;color:#333;font-weight:normal;white-space:nowrap;-webkit-text-stroke:0.25px #fff;">km</div>
<svg style="position:absolute;left:828.0px;top:996px;" width="16" height="8" viewBox="0 0 16 8"><polygon points="0,0 16,0 8.0,8" fill="#555"/></svg>
<div style="position:absolute;left:1251px;top:988px;font-family:'Liberation Sans', sans-serif;font-size:24px;line-height:24px;height:24px;color:#333;font-weight:normal;white-space:nowrap;transform:translateX(-100%);-webkit-text-stroke:0.25px #fff;">0.25</div>
<div style="position:absolute;left:1649px;top:988px;font-family:'Liberation Sans', sans-serif;font-size:24px;line-height:24px;height:24px;color:#333;font-weight:normal;white-space:nowrap;transform:translateX(-100%);-webkit-text-stroke:0.25px #fff;">0.3</div>
<svg style="position:absolute;left:1664px;top:984px;" width="31" height="31" viewBox="0 0 31 31"><circle cx="15.5" cy="15.5" r="14" fill="none" stroke="#0a8a1a" stroke-width="2"/><path d="M9,16 L14,21 L23,11" fill="none" stroke="#0a8a1a" stroke-width="2"/></svg>
<div style="position:absolute;left:1706px;top:988px;font-family:'Liberation Sans', sans-serif;font-size:24px;line-height:24px;height:24px;color:#333;font-weight:normal;white-space:nowrap;-webkit-text-stroke:0.25px #c9fcc0;">0.4</div>
<div style="position:absolute;left:468px;top:1020px;width:1352px;height:2px;background:#7a7a7a;"></div>
<div style="position:absolute;left:468px;top:1022px;width:228px;height:42px;background:#e6e6e6;"></div>
<div style="position:absolute;left:1658px;top:1022px;width:162px;height:42px;background:#c9fcc0;"></div>
<div style="position:absolute;left:473.19px;top:1032px;font-family:'Liberation Sans', sans-serif;font-size:24px;line-height:24px;height:24px;color:#333;font-weight:normal;white-space:nowrap;transform-origin:0 0;transform:scaleX(0.9946);-webkit-text-stroke:0.25px #e6e6e6;">Min Detectable Si...</div>
<div style="position:absolute;left:705px;top:1032px;font-family:'Liberation Sans', sans-serif;font-size:24px;line-height:24px;height:24px;color:#333;font-weight:normal;white-space:nowrap;-webkit-text-stroke:0.25px #fff;">dBm</div>
<svg style="position:absolute;left:828.0px;top:1040px;" width="16" height="8" viewBox="0 0 16 8"><polygon points="0,0 16,0 8.0,8" fill="#555"/></svg>
<div style="position:absolute;left:1251px;top:1032px;font-family:'Liberation Sans', sans-serif;font-size:24px;line-height:24px;height:24px;color:#333;font-weight:normal;white-space:nowrap;transform:translateX(-100%);-webkit-text-stroke:0.25px #fff;">-60</div>
<div style="position:absolute;left:1649px;top:1032px;font-family:'Liberation Sans', sans-serif;font-size:24px;line-height:24px;height:24px;color:#333;font-weight:normal;white-space:nowrap;transform:translateX(-100%);-webkit-text-stroke:0.25px #fff;">-80</div>
<svg style="position:absolute;left:1664px;top:1028px;" width="31" height="31" viewBox="0 0 31 31"><circle cx="15.5" cy="15.5" r="14" fill="none" stroke="#0a8a1a" stroke-width="2"/><path d="M9,16 L14,21 L23,11" fill="none" stroke="#0a8a1a" stroke-width="2"/></svg>
<div style="position:absolute;left:1706px;top:1032px;font-family:'Liberation Sans', sans-serif;font-size:24px;line-height:24px;height:24px;color:#333;font-weight:normal;white-space:nowrap;-webkit-text-stroke:0.25px #c9fcc0;">-83.2911</div>
<div style="position:absolute;left:468px;top:1064px;width:1352px;height:2px;background:#7a7a7a;"></div>
<div style="position:absolute;left:468px;top:1066px;width:228px;height:42px;background:#e6e6e6;"></div>
<div style="position:absolute;left:1658px;top:1066px;width:162px;height:42px;background:#c9fcc0;"></div>
<div style="position:absolute;left:473.19px;top:1076px;font-family:'Liberation Sans', sans-serif;font-size:24px;line-height:24px;height:24px;color:#333;font-weight:normal;white-space:nowrap;transform-origin:0 0;transform:scaleX(0.9943);-webkit-text-stroke:0.25px #e6e6e6;">Min Range</div>
<div style="position:absolute;left:705px;top:1076px;font-family:'Liberation Sans', sans-serif;font-size:24px;line-height:24px;height:24px;color:#333;font-weight:normal;white-space:nowrap;-webkit-text-stroke:0.25px #fff;">m</div>
<svg style="position:absolute;left:828.0px;top:1084px;" width="16" height="8" viewBox="0 0 16 8"><polygon points="0,0 16,0 8.0,8" fill="#555"/></svg>
<div style="position:absolute;left:1251px;top:1076px;font-family:'Liberation Sans', sans-serif;font-size:24px;line-height:24px;height:24px;color:#333;font-weight:normal;white-space:nowrap;transform:translateX(-100%);-webkit-text-stroke:0.25px #fff;">3000</div>
<div style="position:absolute;left:1649px;top:1076px;font-family:'Liberation Sans', sans-serif;font-size:24px;line-height:24px;height:24px;color:#333;font-weight:normal;white-space:nowrap;transform:translateX(-100%);-webkit-text-stroke:0.25px #fff;">150</div>
<svg style="position:absolute;left:1664px;top:1072px;" width="31" height="31" viewBox="0 0 31 31"><circle cx="15.5" cy="15.5" r="14" fill="none" stroke="#0a8a1a" stroke-width="2"/><path d="M9,16 L14,21 L23,11" fill="none" stroke="#0a8a1a" stroke-width="2"/></svg>
<div style="position:absolute;left:1706px;top:1076px;font-family:'Liberation Sans', sans-serif;font-size:24px;line-height:24px;height:24px;color:#333;font-weight:normal;white-space:nowrap;-webkit-text-stroke:0.25px #c9fcc0;">0</div>
<div style="position:absolute;left:696px;top:923px;width:2px;height:185px;background:#7a7a7a;"></div>
<div style="position:absolute;left:860px;top:923px;width:2px;height:185px;background:#7a7a7a;"></div>
<div style="position:absolute;left:1258px;top:923px;width:2px;height:185px;background:#7a7a7a;"></div>
<div style="position:absolute;left:1656px;top:923px;width:2px;height:185px;background:#7a7a7a;"></div>
<div style="position:absolute;left:1820px;top:923px;width:2px;height:53px;background:#7a7a7a;"></div>
<div style="position:absolute;left:1820px;top:978px;width:33px;height:130px;background:#f0f0f0;"></div>
<svg style="position:absolute;left:1829px;top:992px;" width="16" height="9" viewBox="0 0 16 9"><polygon points="0,9 16,9 8,0" fill="#bdbdbd"/></svg>
<div style="position:absolute;left:1822px;top:1012px;width:30px;height:34px;background:#bdbdbd;"></div>
<svg style="position:absolute;left:1829.0px;top:1085px;" width="16" height="9" viewBox="0 0 16 9"><polygon points="0,0 16,0 8.0,9" fill="#555"/></svg>
<div style="position:absolute;left:0px;top:1112px;width:1856px;height:44px;background:#e6e6e6;"></div>
<div style="position:absolute;left:464px;top:1112px;width:2px;height:44px;background:#c0c0c0;"></div>
<svg style="position:absolute;left:14px;top:1122px;" width="18" height="24" viewBox="0 0 18 24"><rect x="0" y="0" width="4" height="24" fill="#9a9a9a"/><polygon points="18,0 18,24 4,12" fill="#9a9a9a"/></svg>
<svg style="position:absolute;left:1823px;top:1126px;" width="24" height="18" viewBox="0 0 24 18"><polygon points="0,0 24,0 12,12" fill="#a0a0a0"/><rect x="0" y="14" width="24" height="4" fill="#a0a0a0"/></svg>
<svg style="position:absolute;left:468px;top:333px;" width="688" height="539" viewBox="0 0 688 539"><g transform="translate(-468,-333)"><rect x="570.5" y="349.5" width="552.5" height="433.5" fill="#c9fcc0"/><rect x="570.5" y="734.5" width="344.5" height="48.5" fill="#ffcaca"/><rect x="915" y="734.5" width="69" height="48.5" fill="#ffe566"/><rect x="984" y="734.5" width="139" height="48.5" fill="#808080"/><defs><clipPath id="c1"><rect x="570.5" y="349.5" width="552.5" height="433.5"/></clipPath></defs><g clip-path="url(#c1)"><polyline points="653.3,383.6 656.1,388.2 658.8,392.7 661.6,397.0 664.3,401.3 667.1,405.4 669.9,409.3 672.6,413.2 675.4,417.0 678.1,420.6 680.9,424.2 683.7,427.7 686.4,431.1 689.2,434.4 691.9,437.7 694.7,440.8 697.5,444.0 700.2,447.0 703.0,450.0 705.7,452.9 708.5,455.7 711.3,458.5 714.0,461.3 716.8,464.0 719.5,466.6 722.3,469.2 725.1,471.7 727.8,474.2 730.6,476.7 733.3,479.1 736.1,481.5 738.9,483.8 741.6,486.1 744.4,488.4 747.1,490.6 749.9,492.8 752.7,494.9 755.4,497.1 758.2,499.2 760.9,501.2 763.7,503.2 766.5,505.3 769.2,507.2 772.0,509.2 774.7,511.1 777.5,513.0 780.3,514.9 783.0,516.7 785.8,518.5 788.5,520.3 791.3,522.1 794.1,523.9 796.8,525.6 799.6,527.3 802.3,529.0 805.1,530.7 807.9,532.3 810.6,534.0 813.4,535.6 816.1,537.2 818.9,538.7 821.7,540.3 824.4,541.8 827.2,543.4 829.9,544.9 832.7,546.4 835.5,547.9 838.2,549.3 841.0,550.8 843.7,552.2 846.5,553.6 849.3,555.0 852.0,556.4 854.8,557.8 857.5,559.2 860.3,560.5 863.1,561.9 865.8,563.2 868.6,564.5 871.3,565.8 874.1,567.1 876.9,568.4 879.6,569.6 882.4,570.9 885.1,572.1 887.9,573.4 890.7,574.6 893.4,575.8 896.2,577.0 898.9,578.2 901.7,579.4 904.5,580.5 907.2,581.7 910.0,582.9 912.7,584.0 915.5,585.1 918.3,586.3 921.0,587.4 923.8,588.5 926.5,589.6 929.3,590.7 932.1,591.8 934.8,592.8 937.6,593.9 940.3,595.0 943.1,596.0 945.9,597.1 948.6,598.1 951.4,599.1 954.1,600.1 956.9,601.1 959.7,602.1 962.4,603.1 965.2,604.1 967.9,605.1 970.7,606.1 973.5,607.1 976.2,608.0 979.0,609.0 981.7,609.9 984.5,610.9 987.3,611.8 990.0,612.8 992.8,613.7 995.5,614.6 998.3,615.5 1001.1,616.4 1003.8,617.3 1006.6,618.2 1009.3,619.1 1012.1,620.0 1014.9,620.9 1017.6,621.8 1020.4,622.6 1023.1,623.5 1025.9,624.3 1028.7,625.2 1031.4,626.1 1034.2,626.9 1036.9,627.7 1039.7,628.6 1042.5,629.4 1045.2,630.2 1048.0,631.0 1050.7,631.9 1053.5,632.7 1056.3,633.5 1059.0,634.3 1061.8,635.1 1064.5,635.9 1067.3,636.6 1070.1,637.4 1072.8,638.2 1075.6,639.0 1078.3,639.7 1081.1,640.5 1083.9,641.3 1086.6,642.0 1089.4,642.8 1092.1,643.5 1094.9,644.3 1097.7,645.0 1100.4,645.8 1103.2,646.5 1105.9,647.2 1108.7,647.9 1111.5,648.7 1114.2,649.4 1117.0,650.1 1119.7,650.8 1122.5,651.5 1125.3,652.2" fill="none" stroke="#1a6fc0" stroke-width="4" stroke-linejoin="round"/><polyline points="571,557 572,388 573.5,385 575,746 576.5,390 578,386 579.5,704 581,392 582,389 583.6,740 585,392 586.5,387 588,420 590,400 593,395 599,734 604,395 606,370" fill="none" stroke="#1a6fc0" stroke-width="4" stroke-linejoin="round" stroke-linecap="round"/><rect x="571" y="386" width="10" height="318" fill="#1a6fc0"/><line x1="570.5" y1="734.5" x2="1123" y2="734.5" stroke="#808080" stroke-width="1.5"/><line x1="570.5" y1="734.5" x2="1123" y2="734.5" stroke="#1a6fc0" stroke-width="4" stroke-dasharray="7.8,4.2"/><line x1="915" y1="349.5" x2="915" y2="783" stroke="#1a1a1a" stroke-width="4" stroke-dasharray="8,2.75,1.5,2.75"/><line x1="984" y1="349.5" x2="984" y2="783" stroke="#1a1a1a" stroke-width="4" stroke-dasharray="7.5,4"/></g><rect x="570.5" y="349.5" width="552.5" height="433.5" fill="none" stroke="#262626" stroke-width="1.6"/><text x="565" y="429.59999999999997" font-family="Liberation Sans" font-size="27.5" fill="#262626" text-anchor="end" >30</text><text x="565" y="510.9" font-family="Liberation Sans" font-size="27.5" fill="#262626" text-anchor="end" >20</text><text x="565" y="592.2" font-family="Liberation Sans" font-size="27.5" fill="#262626" text-anchor="end" >10</text><text x="565" y="673.5" font-family="Liberation Sans" font-size="27.5" fill="#262626" text-anchor="end" >0</text><text x="565" y="754.8" font-family="Liberation Sans" font-size="27.5" fill="#262626" text-anchor="end" >-10</text><text x="846.5" y="809.5" font-family="Liberation Sans" font-size="27.5" fill="#262626" text-anchor="middle" >200</text><text x="1122.5" y="809.5" font-family="Liberation Sans" font-size="27.5" fill="#262626" text-anchor="middle" >400</text><text x="846" y="853" font-family="Liberation Sans" font-size="29" fill="#262626" text-anchor="middle" >Target Range (m)</text><text x="506" y="566" font-family="Liberation Sans" font-size="29" fill="#262626" text-anchor="middle" transform="rotate(-90 506 566)">SNR (dB)</text><rect x="581.5" y="357.5" width="290" height="134" fill="#fff" stroke="#262626" stroke-width="1.5"/><line x1="591" y1="378" x2="655" y2="378" stroke="#262626" stroke-width="4" stroke-dasharray="8,2.75,1.5,2.75"/><line x1="591" y1="409.5" x2="655" y2="409.5" stroke="#262626" stroke-width="4" stroke-dasharray="7.5,4"/><line x1="591" y1="440.5" x2="655" y2="440.5" stroke="#1a6fc0" stroke-width="4" stroke-dasharray="7.5,4"/><line x1="591" y1="471" x2="655" y2="471" stroke="#1a6fc0" stroke-width="4"/><text x="660" y="384" font-family="Liberation Sans" font-size="21" fill="#262626" text-anchor="start" >Threshold Max Range</text><text x="660" y="415.5" font-family="Liberation Sans" font-size="21" fill="#262626" text-anchor="start" >Objective Max Range</text><text x="660" y="446.5" font-family="Liberation Sans" font-size="21" fill="#262626" text-anchor="start" >Detectability</text><text x="660" y="477" font-family="Liberation Sans" font-size="21" fill="#262626" text-anchor="start" >AutomotiveRadar</text><rect x="973.5" y="352.5" width="110" height="47" fill="#fff" stroke="#262626" stroke-width="1.5"/><text x="1028.8" y="383.5" font-family="Liberation Sans" font-size="27.3" fill="#262626" text-anchor="middle" >Legend</text></g></svg>
<svg style="position:absolute;left:1162px;top:333px;" width="691" height="539" viewBox="0 0 691 539"><g transform="translate(-1162,-333)"><rect x="1249.5" y="378.5" width="575.0" height="404.5" fill="#cdd9fc"/><line x1="1297.3" y1="783" x2="1297.3" y2="771" stroke="#2b3350" stroke-width="2"/><line x1="1297.3" y1="378.5" x2="1297.3" y2="390.5" stroke="#2b3350" stroke-width="2"/><line x1="1416.95" y1="783" x2="1416.95" y2="777" stroke="#2b3350" stroke-width="2"/><line x1="1416.95" y1="378.5" x2="1416.95" y2="384.5" stroke="#2b3350" stroke-width="2"/><line x1="1536.6" y1="783" x2="1536.6" y2="771" stroke="#2b3350" stroke-width="2"/><line x1="1536.6" y1="378.5" x2="1536.6" y2="390.5" stroke="#2b3350" stroke-width="2"/><line x1="1656.25" y1="783" x2="1656.25" y2="777" stroke="#2b3350" stroke-width="2"/><line x1="1656.25" y1="378.5" x2="1656.25" y2="384.5" stroke="#2b3350" stroke-width="2"/><line x1="1775.8999999999999" y1="783" x2="1775.8999999999999" y2="771" stroke="#2b3350" stroke-width="2"/><line x1="1775.8999999999999" y1="378.5" x2="1775.8999999999999" y2="390.5" stroke="#2b3350" stroke-width="2"/><line x1="1249.5" y1="400.0" x2="1255.5" y2="400.0" stroke="#2b3350" stroke-width="2"/><line x1="1824.5" y1="400.0" x2="1818.5" y2="400.0" stroke="#2b3350" stroke-width="2"/><line x1="1249.5" y1="472.09999999999997" x2="1261.5" y2="472.09999999999997" stroke="#2b3350" stroke-width="2"/><line x1="1824.5" y1="472.09999999999997" x2="1812.5" y2="472.09999999999997" stroke="#2b3350" stroke-width="2"/><line x1="1249.5" y1="544.1999999999999" x2="1255.5" y2="544.1999999999999" stroke="#2b3350" stroke-width="2"/><line x1="1824.5" y1="544.1999999999999" x2="1818.5" y2="544.1999999999999" stroke="#2b3350" stroke-width="2"/><line x1="1249.5" y1="616.3" x2="1261.5" y2="616.3" stroke="#2b3350" stroke-width="2"/><line x1="1824.5" y1="616.3" x2="1812.5" y2="616.3" stroke="#2b3350" stroke-width="2"/><line x1="1249.5" y1="688.4" x2="1255.5" y2="688.4" stroke="#2b3350" stroke-width="2"/><line x1="1824.5" y1="688.4" x2="1818.5" y2="688.4" stroke="#2b3350" stroke-width="2"/><line x1="1249.5" y1="760.5" x2="1261.5" y2="760.5" stroke="#2b3350" stroke-width="2"/><line x1="1824.5" y1="760.5" x2="1812.5" y2="760.5" stroke="#2b3350" stroke-width="2"/><line x1="1249.5" y1="616.3" x2="1824.5" y2="616.3" stroke="#808080" stroke-width="4"/><line x1="1297.3" y1="400.0" x2="1297.3" y2="544.1999999999999" stroke="#7a7a7a" stroke-width="2" stroke-dasharray="8,5"/><line x1="1297.3" y1="400.0" x2="1536.6" y2="544.1999999999999" stroke="#7a7a7a" stroke-width="2" stroke-dasharray="8,5"/><line x1="1297.3" y1="400.0" x2="1775.8999999999999" y2="544.1999999999999" stroke="#7a7a7a" stroke-width="2" stroke-dasharray="8,5"/><line x1="1249.5" y1="544.1999999999999" x2="1824.5" y2="544.1999999999999" stroke="#8b1c1c" stroke-width="4" stroke-dasharray="8,5"/><polygon points="1284.8,408.0 1309.8,408.0 1297.3,387.5" fill="#1a6fc0"/><polygon points="1284.8,552.1999999999999 1309.8,552.1999999999999 1297.3,531.6999999999999" fill="#8b1c1c"/><polygon points="1524.1,552.1999999999999 1549.1,552.1999999999999 1536.6,531.6999999999999" fill="#ff3b33"/><polygon points="1763.3999999999999,552.1999999999999 1788.3999999999999,552.1999999999999 1775.8999999999999,531.6999999999999" fill="#ff9c98"/><rect x="1249.5" y="378.5" width="575.0" height="404.5" fill="none" stroke="#1e2233" stroke-width="2"/><text x="1243.5" y="479.59999999999997" font-family="Liberation Sans" font-size="27.5" fill="#262626" text-anchor="end" >2</text><text x="1243.5" y="623.8" font-family="Liberation Sans" font-size="27.5" fill="#262626" text-anchor="end" >0</text><text x="1243.5" y="768.0" font-family="Liberation Sans" font-size="27.5" fill="#262626" text-anchor="end" >-2</text><text x="1297.3" y="809.5" font-family="Liberation Sans" font-size="27.5" fill="#262626" text-anchor="middle" >0</text><text x="1536.6" y="809.5" font-family="Liberation Sans" font-size="27.5" fill="#262626" text-anchor="middle" >200</text><text x="1775.8999999999999" y="809.5" font-family="Liberation Sans" font-size="27.5" fill="#262626" text-anchor="middle" >400</text><text x="1537" y="853" font-family="Liberation Sans" font-size="29" fill="#262626" text-anchor="middle" >Ground Range (m)</text><text x="1537" y="370" font-family="Liberation Sans" font-size="29" fill="#262626" text-anchor="middle" >Constant Height Target</text><text x="1202" y="580" font-family="Liberation Sans" font-size="29" fill="#262626" text-anchor="middle" transform="rotate(-90 1202 580)">Height (m)</text><rect x="1260.5" y="629.5" width="316" height="144" fill="#fff" stroke="#1e1e1e" stroke-width="1.5"/><polygon points="1296.0,654.1 1309.0,654.1 1302.5,643.1" fill="#1a6fc0"/><polygon points="1296.0,685.0 1309.0,685.0 1302.5,674.0" fill="#8b1c1c"/><line x1="1270.5" y1="712" x2="1334.5" y2="712" stroke="#808080" stroke-width="4"/><rect x="1270.5" y="732.5" width="64" height="31.5" fill="#cdd9fc"/><text x="1338.5" y="656.1" font-family="Liberation Sans" font-size="21" fill="#262626" text-anchor="start" >AutomotiveRadar</text><text x="1338.5" y="687.0" font-family="Liberation Sans" font-size="21" fill="#262626" text-anchor="start" >Target Positions</text><text x="1338.5" y="717.8" font-family="Liberation Sans" font-size="21" fill="#262626" text-anchor="start" >Effective Radius = Inf km</text><text x="1338.5" y="753.8" font-family="Liberation Sans" font-size="21" fill="#262626" text-anchor="start" >Free Space</text></g></svg>
</body></html>
